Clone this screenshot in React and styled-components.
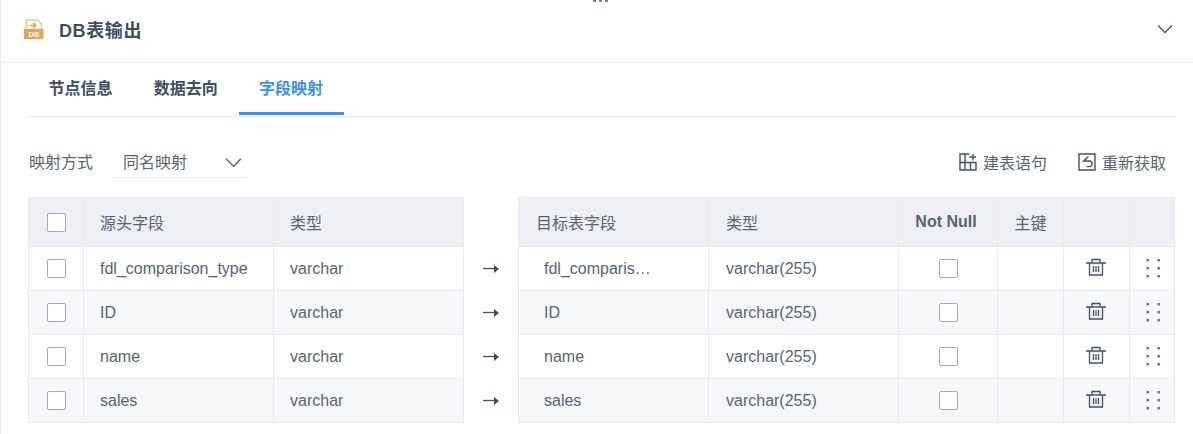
import styled, { createGlobalStyle } from 'styled-components';

const GlobalStyle = createGlobalStyle`
    html, body {
        margin: 0;
        background: #fff;
    }
    body {
        font-family: "Liberation Sans", "Noto Sans CJK SC", sans-serif;
        color: #596377;
    }
`;

const LEFT_COLUMNS = '56px 190px 190px';
const RIGHT_COLUMNS = '191px 190px 99px 66px 66px 45px';

const sourceRows = ['fdl_comparison_type', 'ID', 'name', 'sales'];
const targetRows = ['fdl_comparis…', 'ID', 'name', 'sales'];

function FileIcon() {
    return (
        <svg width="20" height="20" viewBox="0 0 20 20" fill="none">
            <path d="M2.500 12V1h10.500l4.500 4v7" stroke="#f0c48c" strokeWidth="1.6" />
            <path d="M5.500 6.500h6M9 4l2.800 2.500L9 9" stroke="#e8a552" strokeWidth="1.6" />
            <rect x="0" y="10" width="19.500" height="10" fill="#e8a552" />
            <text x="10" y="18" textAnchor="middle" fontSize="7.500" fontWeight="700" fontFamily="Liberation Sans" fill="#fff">DB</text>
        </svg>
    );
}

function Chevron({ size = 16, color = '#4c566f' }) {
    return (
        <svg width={size} height={size} viewBox="0 0 16 16" fill="none">
            <path d="M1 4.500l7 7 7-7" stroke={color} strokeWidth="1.300" />
        </svg>
    );
}

function TableAddIcon() {
    return (
        <svg width="18" height="18" viewBox="0 0 18 18" fill="none" stroke="#46506a" strokeWidth="1.400">
            <path d="M10 1H1v16h16V9.500H1M6 1v16M11.500 9.500V17" />
            <path d="M14 1v6.500M10.500 4H17" />
        </svg>
    );
}

function RefreshIcon() {
    return (
        <svg width="18" height="18" viewBox="0 0 18 18" fill="none" stroke="#46506a" strokeWidth="1.400">
            <path d="M1 1h16v16H1z" />
            <path d="M10.500 3.500L5.500 8h5.800a2.800 2.800 0 010 5.600H8.500" />
        </svg>
    );
}

function TrashIcon() {
    return (
        <TrashSvg width="20" height="18" viewBox="0 0 20 18" fill="none" stroke="#46506a" strokeWidth="1.300">
            <path d="M0 5h20M6 5V1.500h8V5M3.500 5v12h13V5M7.500 8v6M10 8v6M12.500 8v6" />
        </TrashSvg>
    );
}

function DragIcon() {
    return (
        <svg width="16" height="19" viewBox="0 0 16 19" fill="#5f6880">
            <rect x="2.500" y="0" width="2.400" height="2.400" />
            <rect x="13.500" y="0" width="2.400" height="2.400" />
            <rect x="2.500" y="8" width="2.400" height="2.400" />
            <rect x="13.500" y="8" width="2.400" height="2.400" />
            <rect x="2.500" y="16" width="2.400" height="2.400" />
            <rect x="13.500" y="16" width="2.400" height="2.400" />
        </svg>
    );
}

function ArrowIcon() {
    return (
        <svg width="16" height="10" viewBox="0 0 16 10">
            <path d="M0 4.500h12" stroke="#4a4f5e" strokeWidth="1.300" />
            <path d="M11 1l5 4-5 4z" fill="#34506f" />
        </svg>
    );
}

export default function App() {
    return (
        <>
            <GlobalStyle />
            <Panel>
                <TopHandle><i /><i /><i /></TopHandle>
                <Header>
                    <HeaderTitle>
                        <FileIcon />
                        <Title>DB表输出</Title>
                    </HeaderTitle>
                    <Chevron />
                </Header>
                <Content>
                    <Tabs>
                        <Tab>节点信息</Tab>
                        <Tab>数据去向</Tab>
                        <Tab $active>字段映射</Tab>
                    </Tabs>
                    <Toolbar>
                        <MappingGroup>
                            <span>映射方式</span>
                            <Select>
                                <span>同名映射</span>
                                <Chevron size={17} color="#5a6478" />
                            </Select>
                        </MappingGroup>
                        <Actions>
                            <Action><TableAddIcon />建表语句</Action>
                            <Action><RefreshIcon />重新获取</Action>
                        </Actions>
                    </Toolbar>
                    <Tables>
                        <Grid $columns={LEFT_COLUMNS}>
                            <HeadCell $center><Checkbox /></HeadCell>
                            <HeadCell>源头字段</HeadCell>
                            <HeadCell>类型</HeadCell>
                            {sourceRows.map((name, index) => (
                                <Row key={name} $striped={index % 2 === 1}>
                                    <Cell $center><Checkbox /></Cell>
                                    <Cell>{name}</Cell>
                                    <Cell>varchar</Cell>
                                </Row>
                            ))}
                        </Grid>
                        <ArrowColumn>
                            {sourceRows.map((name) => (
                                <ArrowSlot key={name}><ArrowIcon /></ArrowSlot>
                            ))}
                        </ArrowColumn>
                        <Grid $columns={RIGHT_COLUMNS}>
                            <HeadCell $pad={17}>目标表字段</HeadCell>
                            <HeadCell $pad={17}>类型</HeadCell>
                            <HeadCell $center $bold>Not Null</HeadCell>
                            <HeadCell $center>主键</HeadCell>
                            <HeadCell />
                            <HeadCell />
                            {targetRows.map((name, index) => (
                                <Row key={name} $striped={index % 2 === 1}>
                                    <Cell $pad={25}>{name}</Cell>
                                    <Cell $pad={17}>varchar(255)</Cell>
                                    <Cell $center><Checkbox /></Cell>
                                    <Cell />
                                    <Cell $center><TrashIcon /></Cell>
                                    <Cell $center><DragIcon /></Cell>
                                </Row>
                            ))}
                        </Grid>
                    </Tables>
                </Content>
            </Panel>
        </>
    );
}

const Panel = styled.div`
    position: relative;
    width: 1193px;
    height: 434px;
    box-sizing: border-box;
    border-left: 1px solid #e8eaf0;
    overflow: hidden;
`;

const TopHandle = styled.div`
    position: absolute;
    top: 0;
    left: 592px;
    display: flex;
    gap: 3px;

    i {
        display: block;
        width: 3px;
        height: 2px;
        background: #7d8494;
    }
`;

const Header = styled.div`
    display: flex;
    align-items: center;
    justify-content: space-between;
    padding: 0 20px 5px 23px;
    height: 57px;
    border-bottom: 1px solid #e8eaf0;
`;

const HeaderTitle = styled.div`
    display: flex;
    align-items: center;
    gap: 15px;
`;

const Title = styled.h1`
    margin: 0;
    font-size: 18px;
    letter-spacing: 0.6px;
    font-weight: 700;
    color: #3d4d66;
`;

const Content = styled.div`
    padding: 0 17px 0 27px;
`;

const Tabs = styled.div`
    display: flex;
    height: 53px;
    border-bottom: 1px solid #e8eaf0;
`;

const Tab = styled.div`
    display: flex;
    align-items: center;
    box-sizing: border-box;
    width: 105.250px;
    justify-content: center;
    height: 52px;
    padding-bottom: 2px;
    font-size: 16px;
    font-weight: 700;
    color: ${(props) => (props.$active ? '#3d8ef7' : '#3d4d66')};
    border-bottom: 3px solid ${(props) => (props.$active ? '#3d8ef7' : 'transparent')};
`;

const Toolbar = styled.div`
    height: 80px;
    display: flex;
    align-items: flex-start;
    justify-content: space-between;
    padding-top: 31px;
    box-sizing: border-box;
    font-size: 16px;
`;

const MappingGroup = styled.div`
    display: flex;
    align-items: center;
    gap: 22px;
    line-height: 30px;
    padding-left: 1px;
`;

const Select = styled.div`
    width: 132px;
    height: 30px;
    box-sizing: border-box;
    padding: 0 5px 0 8px;
    display: flex;
    align-items: center;
    justify-content: space-between;
    border-bottom: 1px solid #e8eaf0;
`;

const Actions = styled.div`
    display: flex;
    gap: 31px;
    padding-right: 10px;
    height: 28px;
`;

const Action = styled.div`
    display: flex;
    align-items: center;
    gap: 6px;
`;

const Tables = styled.div`
    display: flex;
`;

const Grid = styled.div`
    display: grid;
    grid-template-columns: ${(props) => props.$columns};
    grid-auto-rows: 44px;
    grid-template-rows: 50px;
    font-size: 16px;
`;

const Row = styled.div`
    display: contents;

    & > div {
        background: ${(props) => (props.$striped ? '#f7f8fa' : '#fff')};
    }
`;

const Cell = styled.div`
    display: flex;
    align-items: center;
    justify-content: ${(props) => (props.$center ? 'center' : 'flex-start')};
    box-sizing: border-box;
    padding-left: ${(props) => (props.$center ? 0 : props.$pad ?? 16)}px;
    border-right: 1px solid #e8eaf0;
    border-bottom: 1px solid #e8eaf0;
    white-space: nowrap;

    &:first-child {
        border-left: 1px solid #e8eaf0;
    }
`;

const HeadCell = styled(Cell)`
    background: #eef0f5;
    border-top: 1px solid #e8eaf0;
    font-weight: ${(props) => (props.$bold ? 700 : 400)};
    padding-right: ${(props) => (props.$bold ? 4 : 0)}px;
`;

const Checkbox = styled.span`
    display: block;
    box-sizing: border-box;
    width: 19px;
    height: 19px;
    background: #fff;
    border: 1px solid #a5a9b8;
    border-radius: 2px;
`;

const TrashSvg = styled.svg`
    margin: -4px 1px 0 0;
`;

const ArrowColumn = styled.div`
    width: 54px;
    padding-top: 50px;
`;

const ArrowSlot = styled.div`
    height: 44px;
    display: flex;
    align-items: center;
    padding-left: 19px;
    box-sizing: border-box;
`;
